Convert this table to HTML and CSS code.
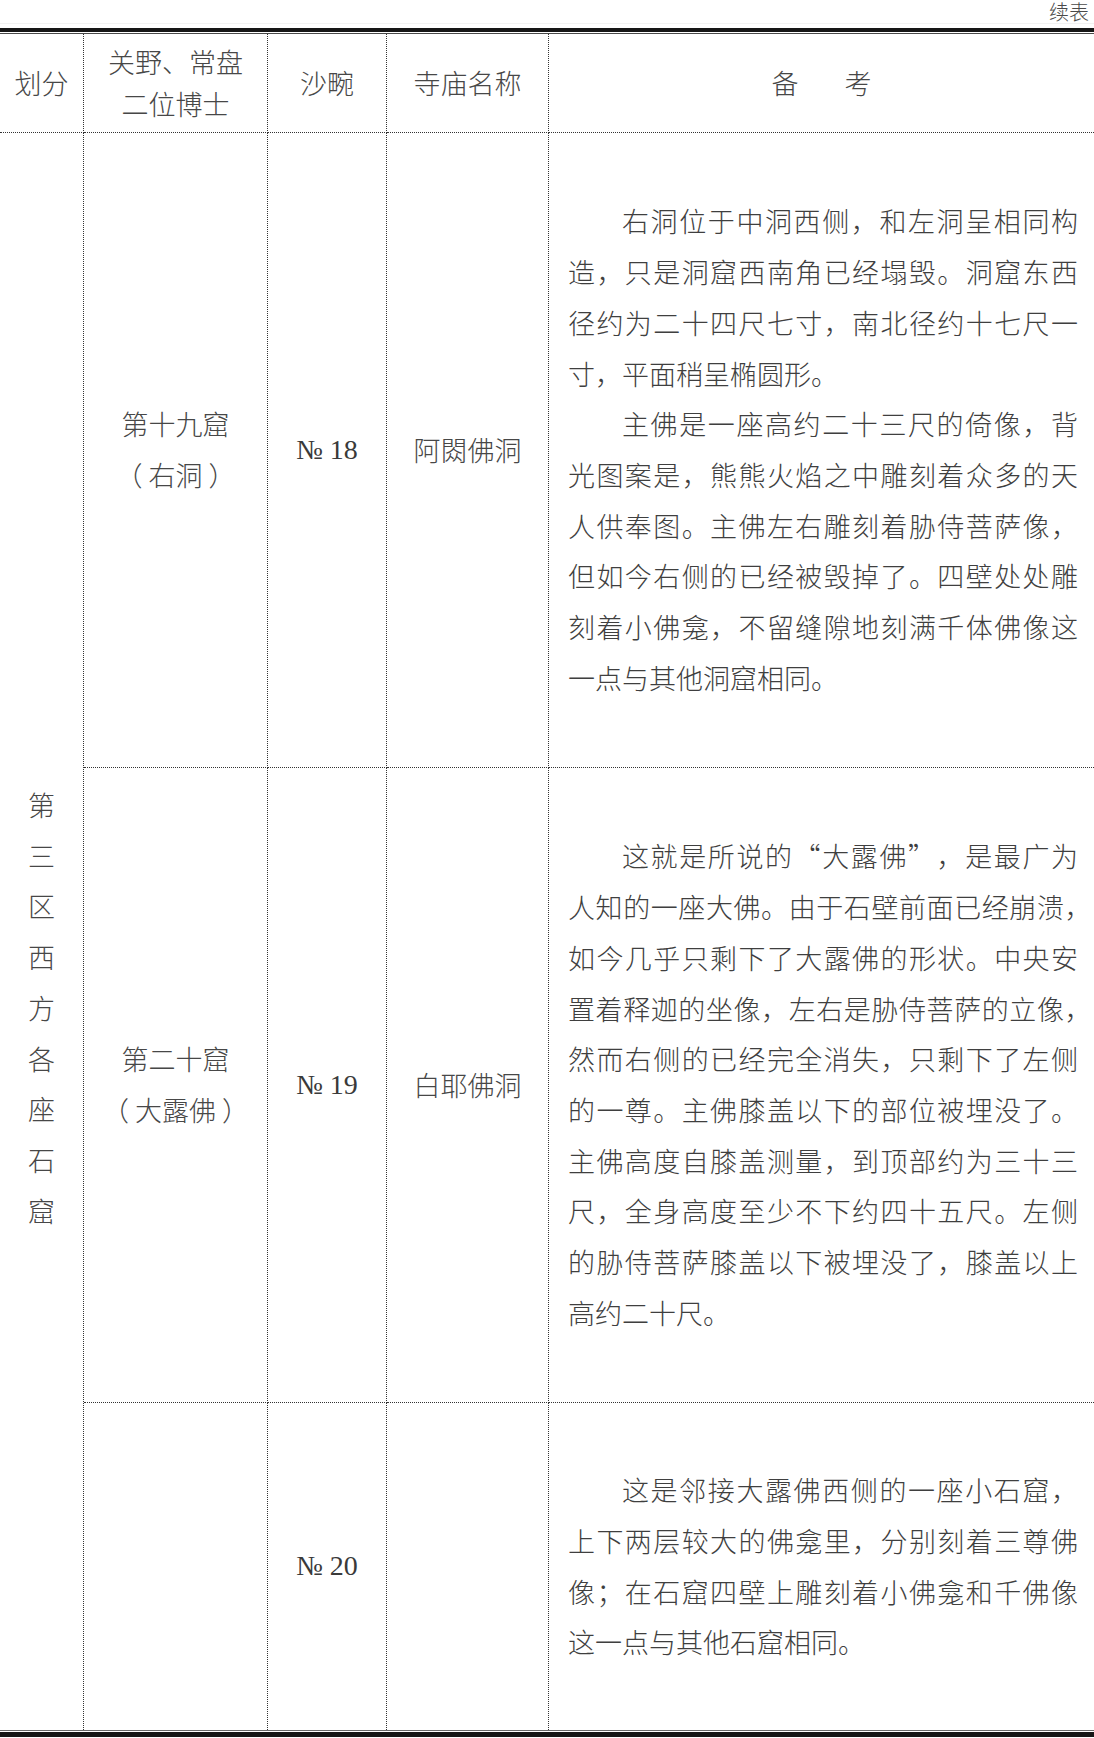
FILE: index.html
```html
<!DOCTYPE html>
<html lang="zh-CN">
<head>
<meta charset="utf-8">
<title>续表</title>
<link rel="stylesheet" href="styles.css">
</head>
<body>
<div class="page">
  <div class="caption">续表</div>
  <div class="rule-top"></div>
  <div class="grid">
    <div class="cell head c1">划分</div>
    <div class="cell head c2">关野、常盘<br>二位博士</div>
    <div class="cell head c3">沙畹</div>
    <div class="cell head c4">寺庙名称</div>
    <div class="cell head c5"><span>备</span><span class="gap"></span><span>考</span></div>

    <div class="cell zone">第三区西方各座石窟</div>

    <div class="cell mid r1">第十九窟<br>（ 右洞 ）</div>
    <div class="cell mid r1 num">№ 18</div>
    <div class="cell mid r1">阿閦佛洞</div>
    <div class="cell note r1">
      <div class="text">
        <p>右洞位于中洞西侧，和左洞呈相同构造，只是洞窟西南角已经塌毁。洞窟东西径约为二十四尺七寸，南北径约十七尺一寸，平面稍呈椭圆形。</p>
        <p>主佛是一座高约二十三尺的倚像，背光图案是，熊熊火焰之中雕刻着众多的天人供奉图。主佛左右雕刻着胁侍菩萨像，但如今右侧的已经被毁掉了。四壁处处雕刻着小佛龛，不留缝隙地刻满千体佛像这一点与其他洞窟相同。</p>
      </div>
    </div>

    <div class="cell mid r2">第二十窟<br>（ 大露佛 ）</div>
    <div class="cell mid r2 num">№ 19</div>
    <div class="cell mid r2">白耶佛洞</div>
    <div class="cell note r2">
      <div class="text">
        <p>这就是所说的<span class="q">“</span>大露佛<span class="q">”</span>，是最广为人知的一座大佛。由于石壁前面已经崩溃<span class="half">，</span>如今几乎只剩下了大露佛的形状。中央安置着释迦的坐像，左右是胁侍菩萨的立像<span class="half">，</span>然而右侧的已经完全消失，只剩下了左侧的一尊。主佛膝盖以下的部位被埋没了。主佛高度自膝盖测量，到顶部约为三十三尺，全身高度至少不下约四十五尺。左侧的胁侍菩萨膝盖以下被埋没了，膝盖以上高约二十尺。</p>
      </div>
    </div>

    <div class="cell mid r3 last"></div>
    <div class="cell mid r3 last num">№ 20</div>
    <div class="cell mid r3 last"></div>
    <div class="cell note r3 last">
      <div class="text">
        <p>这是邻接大露佛西侧的一座小石窟，上下两层较大的佛龛里，分别刻着三尊佛像；在石窟四壁上雕刻着小佛龛和千佛像这一点与其他石窟相同。</p>
      </div>
    </div>
  </div>
  <div class="rule-bottom"></div>
</div>
</body>
</html>
```

FILE: styles.css
```css
html, body {
  margin: 0;
  padding: 0;
  background: #ffffff;
}

body {
  font-family: "Noto Sans CJK SC", "Noto Sans", sans-serif;
  font-weight: 300;
  color: #3f3f3f;
  text-spacing-trim: space-all;
}

.page {
  width: 1094px;
  height: 1738px;
  overflow: hidden;
}

.caption {
  height: 24px;
  border-bottom: 1px solid #f2f2f2;
  margin-bottom: 4px;
  font-size: 20px;
  line-height: 23px;
  text-align: right;
  padding-right: 5px;
  color: #4a4a4a;
  box-sizing: border-box;
}

.rule-top {
  height: 1px;
  border-top: 4px solid #161616;
  border-bottom: 1px solid #4a4a4a;
}

.grid {
  display: grid;
  grid-template-columns: 84px 184px 119px 162px 545px;
  grid-template-rows: 99px 635px 635px 327px;
}

.cell {
  box-sizing: border-box;
  border-right: 1px dotted #333333;
  border-bottom: 1px dotted #333333;
}

.c5, .note {
  border-right: none;
}

.last {
  border-bottom: none;
}

.head {
  display: flex;
  align-items: center;
  justify-content: center;
  text-align: center;
  font-size: 27px;
  line-height: 42px;
  color: #474747;
}

.gap {
  display: inline-block;
  width: 46px;
}

.zone {
  grid-column: 1;
  grid-row: 2 / 5;
  border-bottom: none;
  font-size: 27px;
  line-height: 50.7px;
  text-align: center;
  padding-top: 647px;
  word-break: break-all;
  padding-left: 28px;
  padding-right: 28px;
  color: #474747;
}

.mid {
  display: flex;
  align-items: center;
  justify-content: center;
  text-align: center;
  font-size: 27px;
  line-height: 50.7px;
  color: #474747;
  white-space: pre-line;
}

.num {
  font-family: "Liberation Serif", "DejaVu Serif", serif;
  font-weight: 400;
  font-size: 28px;
  color: #3a3a3a;
}

.note {
  display: flex;
  align-items: center;
  padding: 0 16px 0 19px;
}

.text {
  width: 100%;
}

.text p {
  margin: 0;
  font-size: 27px;
  line-height: 50.7px;
  text-indent: 2em;
  text-align: justify;
}

.q {
  display: inline-block;
  width: 1em;
  text-indent: 0;
  text-align: center;
}

.half {
  letter-spacing: -0.5em;
}

.rule-bottom {
  height: 1px;
  border-top: 1px solid #6a6a6a;
  border-bottom: 5px solid #161616;
}
```
